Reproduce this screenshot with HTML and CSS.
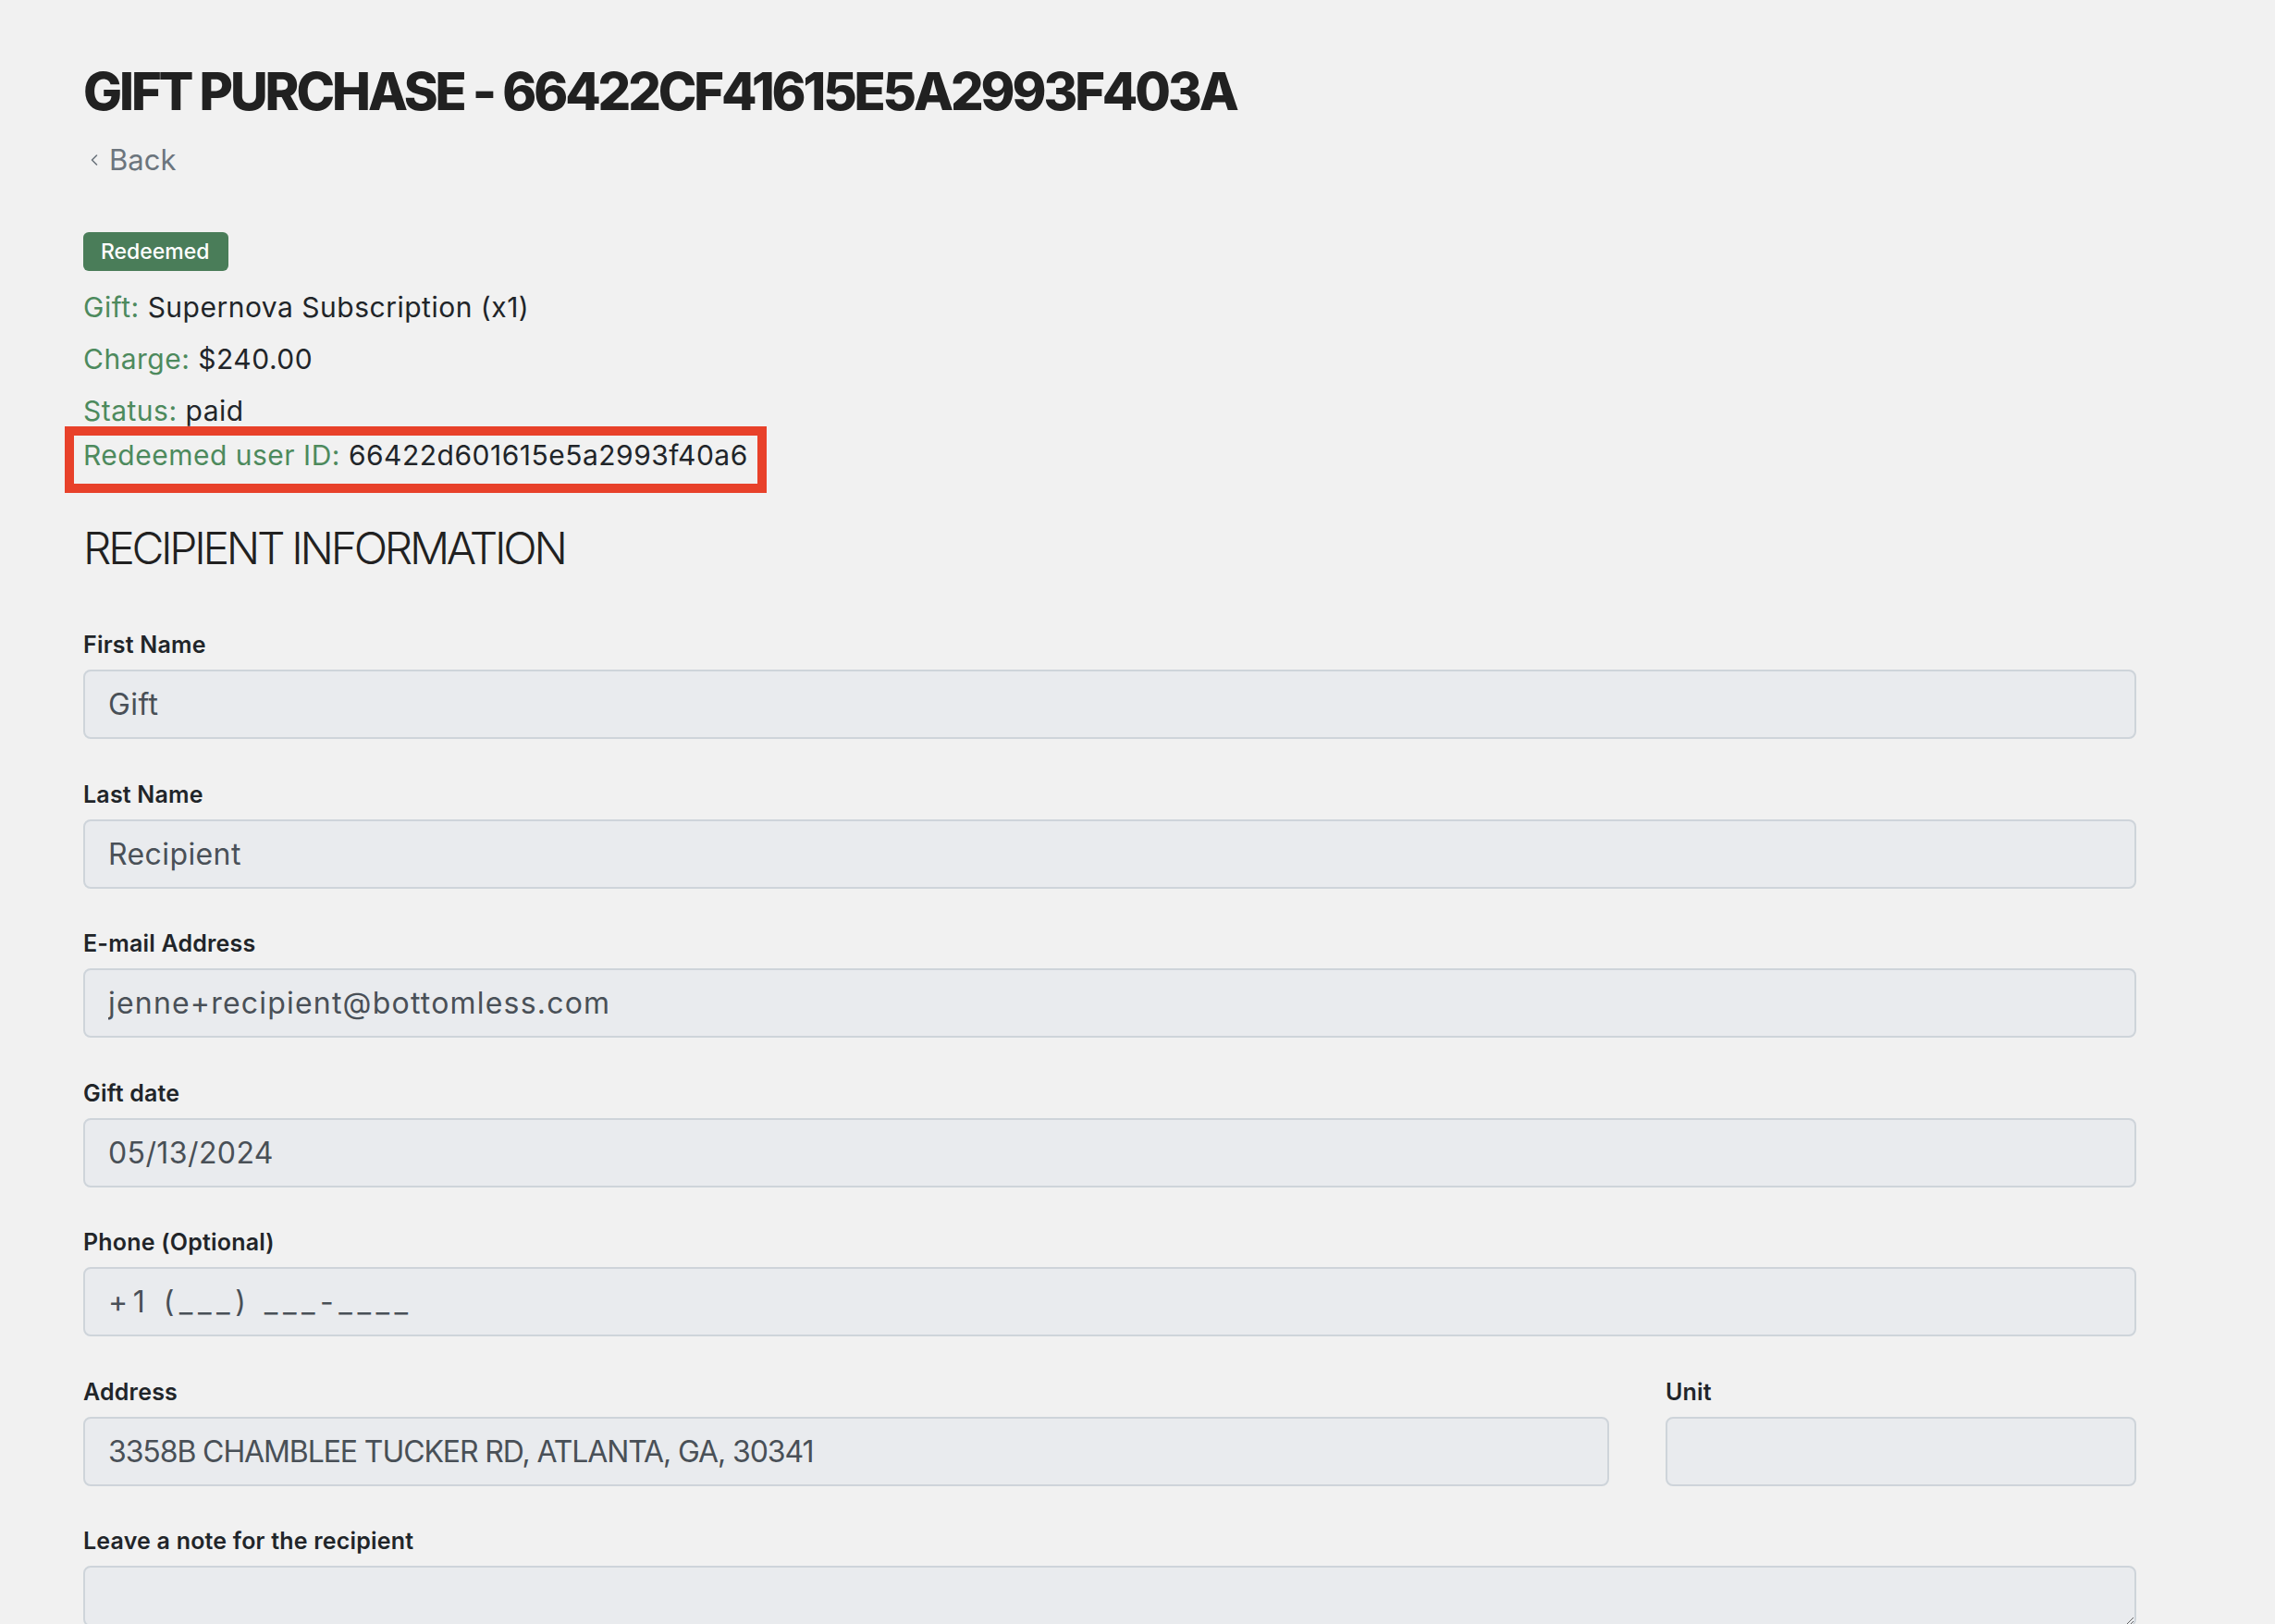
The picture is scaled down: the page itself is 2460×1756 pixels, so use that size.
FILE: index.html
```html
<!DOCTYPE html>
<html lang="en">
<head>
<meta charset="utf-8">
<title>Gift purchase</title>
<link rel="stylesheet" href="styles.css">
</head>
<body>
<main class="page">
  <h1 class="title">GIFT PURCHASE - 66422CF41615E5A2993F403A</h1>
  <a class="back" href="#">
    <svg class="back-icon" width="10" height="14" viewBox="0 0 10 14" aria-hidden="true"><path d="M7.5 2 L2.5 7 L7.5 12" fill="none" stroke="currentColor" stroke-width="1.6" stroke-linecap="round" stroke-linejoin="round"/></svg>
    <span>Back</span>
  </a>
  <div class="status-row"><span class="badge">Redeemed</span></div>
  <div class="info">
    <p class="info-line"><span class="key">Gift:</span> Supernova Subscription (x1)</p>
    <p class="info-line"><span class="key">Charge:</span> $240.00</p>
    <p class="info-line"><span class="key">Status:</span> paid</p>
    <p class="info-line highlight"><span class="key">Redeemed user ID:</span> 66422d601615e5a2993f40a6</p>
  </div>
  <h2 class="section-title">RECIPIENT INFORMATION</h2>
  <form class="form">
    <div class="group">
      <label class="label" for="first">First Name</label>
      <input class="field" id="first" type="text" value="Gift" readonly>
    </div>
    <div class="group">
      <label class="label" for="last">Last Name</label>
      <input class="field" id="last" type="text" value="Recipient" readonly>
    </div>
    <div class="group">
      <label class="label" for="email">E-mail Address</label>
      <input class="field field-wide" id="email" type="text" value="jenne+recipient@bottomless.com" readonly>
    </div>
    <div class="group">
      <label class="label" for="date">Gift date</label>
      <input class="field" id="date" type="text" value="05/13/2024" readonly>
    </div>
    <div class="group">
      <label class="label" for="phone">Phone (Optional)</label>
      <input class="field field-mask" id="phone" type="text" value="+1 (___) ___-____" readonly>
    </div>
    <div class="address-row">
      <div class="group">
        <label class="label" for="address">Address</label>
        <input class="field field-caps" id="address" type="text" value="3358B CHAMBLEE TUCKER RD, ATLANTA, GA, 30341" readonly>
      </div>
      <div class="group">
        <label class="label" for="unit">Unit</label>
        <input class="field" id="unit" type="text" value="" readonly>
      </div>
    </div>
    <div class="group">
      <label class="label" for="note">Leave a note for the recipient</label>
      <textarea class="field note" id="note" readonly></textarea>
    </div>
  </form>
</main>
</body>
</html>
```
FILE: styles.css
```css
html {
  overflow: hidden;
}
body {
  margin: 0;
  background: #f1f1f1;
  font-family: Inter, "Noto Sans", sans-serif;
  color: #212529;
}
.page {
  width: 2220px;
  padding: 65px 0 0 90px;
}
.title {
  margin: 0;
  font-size: 56px;
  line-height: 68px;
  font-weight: 800;
  color: #212121;
  letter-spacing: -3.1px;
}
.back {
  margin-top: 20px;
  height: 40px;
  display: flex;
  align-items: center;
  gap: 11px;
  color: #6c757d;
  text-decoration: none;
  font-size: 31px;
  line-height: 40px;
}
.back-icon {
  margin-left: 7px;
}
.status-row {
  margin-top: 58px;
  display: flex;
}
.badge {
  height: 42px;
  line-height: 42px;
  padding: 0 20px 0 19px;
  border-radius: 6px;
  background: #4a7d59;
  color: #ffffff;
  font-size: 23px;
  font-weight: 500;
}
.info {
  margin-top: 18px;
  display: flex;
  flex-direction: column;
  gap: 14px;
}
.info-line {
  margin: 0;
  font-size: 30px;
  line-height: 42px;
  letter-spacing: 0.5px;
  color: #212529;
}
.key {
  color: #4d8a5d;
}
.highlight {
  margin: -18px 0 0 -20px;
  width: fit-content;
  border: 10px solid #e8412a;
  padding: 0 10px 10px 10px;
}
.section-title {
  margin: 31px 0 0 0;
  font-size: 48px;
  line-height: 58px;
  font-weight: 300;
  letter-spacing: -3.3px;
  color: #212121;
}
.form {
  margin-top: 56px;
  display: flex;
  flex-direction: column;
  gap: 40.5px;
}
.group {
  display: flex;
  flex-direction: column;
}
.label {
  font-size: 25px;
  line-height: 38px;
  font-weight: 600;
  letter-spacing: 0.2px;
  color: #212529;
  margin-bottom: 8px;
}
.field {
  box-sizing: border-box;
  width: 100%;
  height: 75px;
  margin: 0;
  padding: 0 25px;
  border: 2px solid #ced4da;
  border-radius: 8px;
  background: #e9ebee;
  color: #495057;
  font-family: Inter, "Noto Sans", sans-serif;
  font-size: 32px;
  letter-spacing: 0.4px;
  outline: none;
}
.field-wide {
  letter-spacing: 1.2px;
}
.field-caps {
  letter-spacing: -1.1px;
}
.field-mask {
  letter-spacing: 5.5px;
}
.note {
  height: 66px;
  padding-top: 12px;
  resize: vertical;
  display: block;
}
.address-row {
  display: grid;
  grid-template-columns: minmax(0, 1650fr) minmax(0, 509fr);
  gap: 61px;
}
```
